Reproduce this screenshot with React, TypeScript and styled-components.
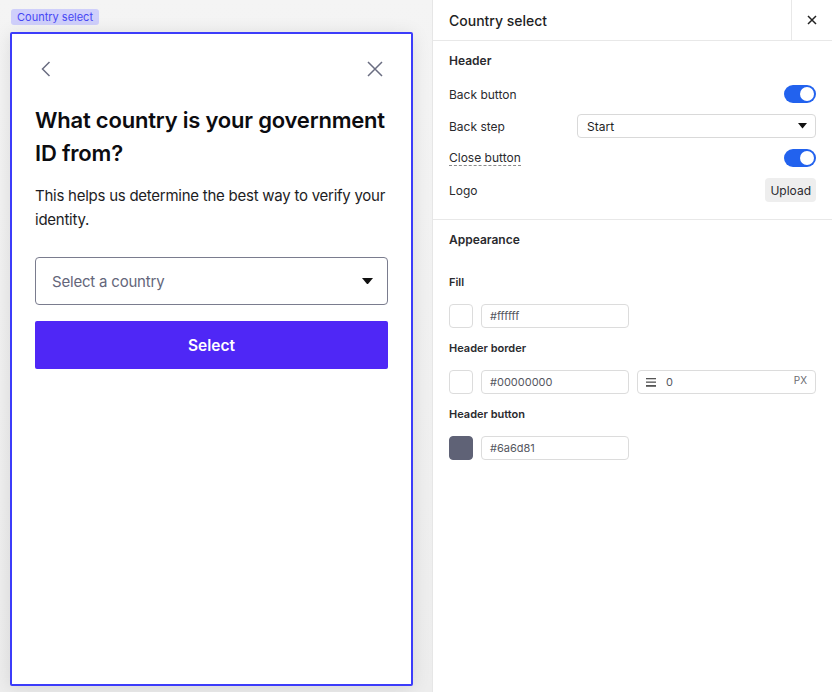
import styled, { createGlobalStyle } from "styled-components";

const GlobalStyle = createGlobalStyle`
  html, body {
    margin: 0;
    padding: 0;
    background: #ffffff;
  }
  body {
    font-family: Inter, "Noto Sans", sans-serif;
    color: #2b2b30;
  }
  * {
    box-sizing: border-box;
  }
`;

const Layout = styled.div`
  display: flex;
  width: 832px;
  height: 692px;
  overflow: hidden;
`;

const Canvas = styled.div`
  width: 432px;
  flex-shrink: 0;
  display: flex;
  flex-direction: column;
  align-items: flex-start;
  padding: 9px 0 0 10px;
  background: linear-gradient(180deg, #f4f4f4 0%, #ededed 100%);
`;

const Tag = styled.div`
  margin-left: 1px;
  padding: 1px 6px;
  border-radius: 3px;
  background: #cfcffb;
  color: #4646f4;
  font-size: 11px;
  line-height: 14px;
`;

const Card = styled.div`
  margin-top: 7px;
  width: 403px;
  height: 654px;
  border: 2px solid #3c3cfa;
  border-radius: 2px;
  background: #ffffff;
  box-shadow: 0 2px 18px rgba(0, 0, 0, 0.1);
  padding: 0 23px;
  display: flex;
  flex-direction: column;
`;

const CardNav = styled.div`
  height: 70px;
  display: flex;
  align-items: center;
  justify-content: space-between;
  padding: 0 5px 0 6px;
  color: #6a6d81;
`;

const Heading = styled.h1`
  margin: 0;
  font-size: 22px;
  line-height: 33px;
  font-weight: 600;
  color: #0c0c10;
  letter-spacing: -0.2px;
`;

const Lead = styled.p`
  margin: 14px 0 0;
  font-size: 15px;
  line-height: 24px;
  color: #1d1d24;
  letter-spacing: -0.25px;
`;

const CountrySelect = styled.div`
  margin-top: 25px;
  height: 48px;
  border: 1px solid #7a7c8e;
  border-radius: 4px;
  display: flex;
  align-items: center;
  justify-content: space-between;
  padding: 0 14px 0 16px;
  font-size: 15px;
  letter-spacing: -0.2px;
  color: #64667a;
`;

const PrimaryButton = styled.button`
  margin-top: 16px;
  height: 48px;
  border: none;
  border-radius: 2px;
  background: #4f27f6;
  color: #ffffff;
  font-family: inherit;
  font-size: 15.5px;
  font-weight: 600;
`;

const Panel = styled.div`
  flex: 1;
  border-left: 1px solid #e6e6e6;
  background: #ffffff;
  display: flex;
  flex-direction: column;
`;

const PanelHeader = styled.div`
  height: 41px;
  display: flex;
  border-bottom: 1px solid #e8e8e8;
`;

const PanelTitle = styled.div`
  flex: 1;
  display: flex;
  align-items: center;
  padding-left: 16px;
  font-size: 14px;
  font-weight: 500;
  color: #1f1f24;
`;

const PanelClose = styled.div`
  width: 41px;
  display: flex;
  align-items: center;
  justify-content: center;
  border-left: 1px solid #e8e8e8;
  color: #222;
`;

const Section = styled.div<{ $last?: boolean }>`
  padding: 12px 16px 13px;
  border-bottom: ${({ $last }) => ($last ? "none" : "1px solid #e8e8e8")};
  display: flex;
  flex-direction: column;
`;

const SectionTitle = styled.div<{ $gap: number }>`
  font-size: 12px;
  font-weight: 600;
  line-height: 16px;
  color: #2a2a2e;
  margin-bottom: ${({ $gap }) => $gap}px;
`;

const Row = styled.div`
  height: 32px;
  display: flex;
  align-items: center;
  justify-content: space-between;
  font-size: 12px;
  color: #2a2a2e;
`;

const DashedLabel = styled.span`
  border-bottom: 1px dashed #8a8a8a;
  line-height: 14px;
`;

const Toggle = styled.div`
  width: 32px;
  height: 18px;
  border-radius: 9px;
  background: #2262ee;
  position: relative;
  &::after {
    content: "";
    position: absolute;
    top: 2px;
    right: 2px;
    width: 14px;
    height: 14px;
    border-radius: 50%;
    background: #ffffff;
  }
`;

const SmallSelect = styled.div`
  width: 239px;
  height: 24px;
  border: 1px solid #d9d9d9;
  border-radius: 4px;
  display: flex;
  align-items: center;
  justify-content: space-between;
  padding: 0 8px 0 9px;
  font-size: 12px;
  color: #1f1f24;
`;

const UploadButton = styled.div`
  height: 24px;
  padding: 0 5px;
  border-radius: 4px;
  background: #eeeeee;
  display: flex;
  align-items: center;
  font-size: 12px;
  color: #2a2a2e;
`;

const Fields = styled.div`
  display: flex;
  flex-direction: column;
  gap: 12px;
`;

const Label = styled.div`
  font-size: 11px;
  font-weight: 600;
  line-height: 16px;
  color: #2a2a2e;
  margin-bottom: 14px;
`;

const FieldRow = styled.div`
  display: flex;
  gap: 8px;
`;

const Swatch = styled.div<{ $color: string }>`
  width: 24px;
  height: 24px;
  border-radius: 4px;
  border: 1px solid ${({ $color }) => ($color === "#ffffff" ? "#dcdcdc" : $color)};
  background: ${({ $color }) => $color};
`;

const TextInput = styled.div<{ $width?: number }>`
  width: ${({ $width }) => $width ?? 148}px;
  height: 24px;
  border: 1px solid #dcdcdc;
  border-radius: 4px;
  display: flex;
  align-items: center;
  padding: 0 8px;
  font-size: 11px;
  color: #55575f;
  gap: 10px;
  position: relative;
`;

const Unit = styled.span`
  position: absolute;
  right: 8px;
  top: 3px;
  font-size: 10px;
  color: #6b6b70;
`;

const Caret = ({ size = 10 }: { size?: number }) => (
  <svg width={size} height={size * 0.6} viewBox="0 0 10 6">
    <path d="M0 0h10L5 6z" fill="#111" />
  </svg>
);

const StackIcon = () => (
  <svg width="10" height="9" viewBox="0 0 10 9">
    <rect x="0" y="0" width="10" height="1.3" fill="#555" />
    <rect x="0" y="3.5" width="10" height="1.3" fill="#555" />
    <rect x="0" y="7" width="10" height="1.8" fill="#555" />
  </svg>
);

export default function App() {
  return (
    <Layout>
      <GlobalStyle />
      <Canvas>
        <Tag>Country select</Tag>
        <Card>
          <CardNav>
            <svg width="10" height="16" viewBox="0 0 10 16">
              <path d="M8.5 1 1.5 8l7 7" fill="none" stroke="currentColor" strokeWidth="1.5" />
            </svg>
            <svg width="16" height="16" viewBox="0 0 16 16">
              <path d="M1 1l14 14M15 1 1 15" fill="none" stroke="currentColor" strokeWidth="1.5" />
            </svg>
          </CardNav>
          <Heading>What country is your government ID from?</Heading>
          <Lead>This helps us determine the best way to verify your identity.</Lead>
          <CountrySelect>
            <span>Select a country</span>
            <Caret size={11} />
          </CountrySelect>
          <PrimaryButton>Select</PrimaryButton>
        </Card>
      </Canvas>
      <Panel>
        <PanelHeader>
          <PanelTitle>Country select</PanelTitle>
          <PanelClose>
            <svg width="10" height="10" viewBox="0 0 10 10">
              <path d="M1 1l8 8M9 1 1 9" stroke="currentColor" strokeWidth="1.5" />
            </svg>
          </PanelClose>
        </PanelHeader>
        <Section>
          <SectionTitle $gap={9}>Header</SectionTitle>
          <Row>
            <span>Back button</span>
            <Toggle />
          </Row>
          <Row>
            <span>Back step</span>
            <SmallSelect>
              <span>Start</span>
              <Caret size={9} />
            </SmallSelect>
          </Row>
          <Row>
            <DashedLabel>Close button</DashedLabel>
            <Toggle />
          </Row>
          <Row>
            <span>Logo</span>
            <UploadButton>Upload</UploadButton>
          </Row>
        </Section>
        <Section $last>
          <SectionTitle $gap={26}>Appearance</SectionTitle>
          <Fields>
            <div>
              <Label>Fill</Label>
              <FieldRow>
                <Swatch $color="#ffffff" />
                <TextInput>#ffffff</TextInput>
              </FieldRow>
            </div>
            <div>
              <Label>Header border</Label>
              <FieldRow>
                <Swatch $color="#ffffff" />
                <TextInput>#00000000</TextInput>
                <TextInput $width={179}>
                  <StackIcon />
                  <span>0</span>
                  <Unit>PX</Unit>
                </TextInput>
              </FieldRow>
            </div>
            <div>
              <Label>Header button</Label>
              <FieldRow>
                <Swatch $color="#5f6276" />
                <TextInput>#6a6d81</TextInput>
              </FieldRow>
            </div>
          </Fields>
        </Section>
      </Panel>
    </Layout>
  );
}
